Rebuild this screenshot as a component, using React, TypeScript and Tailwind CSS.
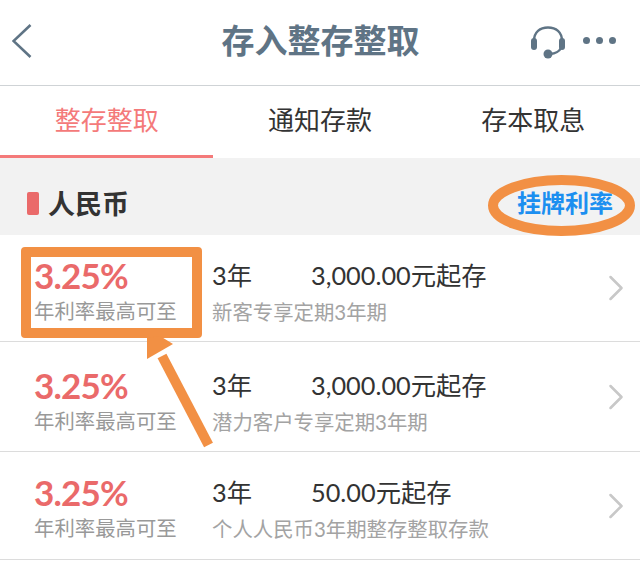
import React from 'react';
import { ChevronRight } from 'lucide-react';

const sans = "font-['Lato','Noto_Sans_CJK_SC',sans-serif]";

const products = [
  { amount: '3,000.00元起存', note: '新客专享定期3年期', h: 'h-[107px]', pt: 'pt-[6px]' },
  { amount: '3,000.00元起存', note: '潜力客户专享定期3年期', h: 'h-[110px]', pt: 'pt-[9px]' },
  { amount: '50.00元起存', note: '个人人民币3年期整存整取存款', h: 'h-[108px]', pt: 'pt-[4px]' },
];

const App: React.FC = () => {
  return (
    <div className={`relative h-[561px] w-[640px] overflow-hidden bg-white ${sans}`}>
      {/* header */}
      <header className="relative flex h-[86px] items-center justify-center border-b border-[#cfd3d6] pb-[4px] pl-[1px]">
        <svg className="absolute left-[12px] top-[24px]" width="20" height="34" viewBox="0 0 20 34" fill="none">
          <path d="M18.5 1 L1.5 17 L18.5 33" stroke="#5f7485" strokeWidth="2.6" />
        </svg>
        <h1 className="text-[33px] font-bold leading-none text-[#5f7485]">存入整存整取</h1>
        <svg className="absolute left-[530px] top-[26px]" width="36" height="34" viewBox="0 0 36 34" fill="none">
          <path d="M4 15 C4 6 10 1.5 18 1.5 C26 1.5 32 6 32 15" stroke="#5f7485" strokeWidth="2.4" />
          <path d="M31 22 C29 26 26 27.5 20 28" stroke="#5f7485" strokeWidth="2.4" />
          <rect x="1" y="12" width="6" height="12" rx="3" fill="#5f7485" />
          <rect x="29" y="12" width="6" height="12" rx="3" fill="#5f7485" />
          <circle cx="18" cy="28" r="4.5" fill="#5f7485" />
        </svg>
        <div className="absolute left-[583px] top-[37px] flex gap-[6px]">
          <span className="h-[7px] w-[7px] rounded-full bg-[#5f7485]" />
          <span className="h-[7px] w-[7px] rounded-full bg-[#5f7485]" />
          <span className="h-[7px] w-[7px] rounded-full bg-[#5f7485]" />
        </div>
      </header>

      {/* tabs */}
      <nav className="grid h-[72px] grid-cols-3 text-center text-[26px] leading-[68px]">
        <div className="border-b-[3px] border-[#f47a7a] text-[#f47a7a]">整存整取</div>
        <div className="text-[#333333]">通知存款</div>
        <div className="text-[#333333]">存本取息</div>
      </nav>

      {/* section title */}
      <section className="flex h-[77px] items-center justify-between bg-[#f2f2f2] px-[27px] pt-[13px]">
        <div className="flex items-center gap-[9px]">
          <span className="h-[23px] w-[12px] rounded-[2px] bg-[#ea6a6a]" />
          <span className="text-[27px] font-bold leading-none text-[#333333]">人民币</span>
        </div>
        <span className="text-[24px] font-bold leading-none text-[#1c8ff0]">挂牌利率</span>
      </section>

      {/* product rows */}
      <ul>
        {products.map((p) => (
          <li key={p.note} className={`flex items-center border-b border-[#dcdcdc] pl-[34px] pr-[2px] ${p.h}`}>
            <div className={`flex flex-1 ${p.pt}`}>
              <div className="w-[178px]">
                <div className="text-[35px] font-bold leading-[38px] tracking-[-0.8px] text-[#ea6a6a]">3.25%</div>
                <div className="pt-[3px] text-[20.4px] leading-[28px] text-[#999999]">年利率最高可至</div>
              </div>
              <div className="flex-1">
                <div className="flex text-[25.3px] leading-[38px] text-[#333333]">
                  <span className="w-[99px]">3年</span>
                  <span>{p.amount}</span>
                </div>
                <div className="pt-[4px] text-[20.4px] leading-[28px] text-[#a3a3a3]">{p.note}</div>
              </div>
            </div>
            <ChevronRight className="h-[44px] w-[44px] text-[#c8c8c8]" strokeWidth={1.4} />
          </li>
        ))}
      </ul>

      {/* orange annotations */}
      <div className="absolute left-[21px] top-[247px] h-[91px] w-[181px] rounded-[4px] border-[10px] border-[#f29044]" />
      <svg className="absolute left-0 top-0" width="640" height="561" viewBox="0 0 640 561" fill="none">
        <ellipse cx="561.5" cy="205.5" rx="68.5" ry="25.5" stroke="#f29044" strokeWidth="10" />
        <path d="M208.5 445 L162 356" stroke="#f29044" strokeWidth="10" />
        <path d="M147 338 L147 359 L173 344 L160 336 Z" fill="#f29044" />
      </svg>
    </div>
  );
};

export default App;
